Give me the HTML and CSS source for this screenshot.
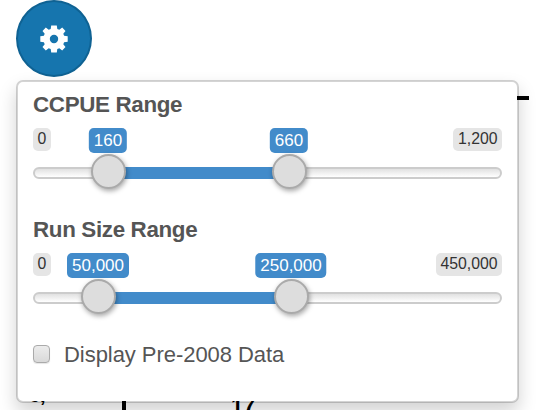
FILE: index.html
```html
<!DOCTYPE html>
<html lang="en">
<head>
<meta charset="utf-8">
<title>Range settings</title>
<link rel="stylesheet" href="styles.css">
</head>
<body>
<div class="plot" aria-hidden="true">
  <span class="axis-line"></span>
  <span class="axis-tick"></span>
  <span class="plot-label label-left">6,</span>
  <span class="plot-label label-mid">17</span>
</div>
<main class="settings">
  <button class="gear-button" aria-label="Settings">
    <svg width="28" height="28" viewBox="0 0 28 28"><path fill="#fff" fill-rule="evenodd" d="M11.2 .4h5.6l.5 3.6 2 .8 2.9-2.2 3.3 3.3-2.2 2.8.8 2 3.6.5v5.6l-3.6.5-.8 2 2.2 2.8-3.3 3.3-2.9-2.2-2 .8-.5 3.6h-5.6l-.5-3.6-2-.8-2.9 2.2-3.3-3.3 2.2-2.8-.8-2-3.6-.5v-5.6l3.6-.5.8-2-2.2-2.8 3.3-3.3 2.9 2.2 2-.8zM14 9.8a4.2 4.2 0 1 0 0 8.4 4.2 4.2 0 0 0 0-8.4z"/></svg>
  </button>
  <section class="panel">
    <div class="field">
      <h2 class="title">CCPUE Range</h2>
      <div class="slider">
        <div class="limits"><span class="limit">0</span><span class="limit">1,200</span></div>
        <div class="track"></div>
        <span class="bar" style="left:75px;width:181px"></span>
        <span class="value" style="left:75px">160</span>
        <span class="value" style="left:256px">660</span>
        <span class="handle" style="left:75px"></span>
        <span class="handle" style="left:256px"></span>
      </div>
    </div>
    <div class="field">
      <h2 class="title">Run Size Range</h2>
      <div class="slider">
        <div class="limits"><span class="limit">0</span><span class="limit">450,000</span></div>
        <div class="track"></div>
        <span class="bar" style="left:65px;width:193px"></span>
        <span class="value" style="left:65px">50,000</span>
        <span class="value" style="left:258px">250,000</span>
        <span class="handle" style="left:65.5px"></span>
        <span class="handle" style="left:258.5px"></span>
      </div>
    </div>
    <label class="check"><input type="checkbox" class="box"><span class="check-text">Display Pre-2008 Data</span></label>
  </section>
</main>
</body>
</html>
```

FILE: styles.css
```css
* { box-sizing: border-box; }
body {
  margin: 0;
  height: 410px;
  overflow: hidden;
  position: relative;
  background: #fff;
  font-family: "Liberation Sans", Arial, sans-serif;
  color: #555;
}
.settings { position: relative; padding-left: 16px; }
.gear-button {
  display: flex;
  align-items: center;
  justify-content: center;
  width: 76px;
  height: 77px;
  padding: 0;
  border: 2px solid #0f6293;
  border-radius: 50%;
  background: #1675ae;
}
.gear-button svg { display: block; }
.panel {
  width: 503px;
  height: 323px;
  margin-top: 3px;
  padding: 8px 15px;
  border: 2px solid rgba(0, 0, 0, .17);
  border-radius: 7px;
  background: #fff;
  background-clip: padding-box;
  box-shadow: 0 9px 18px rgba(0, 0, 0, .175);
}
.field { height: 125px; }
.title {
  margin: 0;
  height: 38px;
  font-size: 22.4px;
  letter-spacing: -.35px;
  line-height: 29px;
  font-weight: bold;
  white-space: nowrap;
}
.slider { position: relative; width: 469px; height: 62px; }
.limits { display: flex; justify-content: space-between; height: 39px; }
.limit {
  height: 23px;
  padding: 0 4.5px;
  border-radius: 5px;
  background: #e5e5e5;
  color: #333;
  font-size: 15.8px;
  line-height: 22px;
}
.track {
  height: 12px;
  border: 2px solid #ccc;
  border-radius: 6px;
  background: linear-gradient(#e1e1e1, #fff);
}
.bar { position: absolute; top: 39px; height: 12px; background: #428bca; }
.value {
  position: absolute;
  top: 0;
  height: 25px;
  padding: 0 5px;
  border-radius: 5px;
  transform: translateX(-50%);
  background: #428bca;
  color: #fff;
  font-size: 17px;
  line-height: 25px;
}
.handle {
  position: absolute;
  top: 26px;
  width: 35px;
  height: 35px;
  margin-left: -17.5px;
  border: 2px solid #aaa;
  border-radius: 50%;
  background: #ddd;
  box-shadow: 1px 2px 5px rgba(0, 0, 0, .35);
}
.check {
  display: flex;
  align-items: center;
  gap: 14px;
  height: 28px;
  font-size: 22px;
  letter-spacing: -.05px;
  white-space: nowrap;
}
.check-text { padding-top: 2px; }
.box {
  appearance: none;
  width: 17px;
  height: 18px;
  margin: 0;
  border: 1.5px solid #aaa;
  border-radius: 4px;
  background: linear-gradient(#ececec, #d9d9d9);
  box-shadow: 0 1px 1px rgba(0, 0, 0, .1);
}
.plot { position: absolute; inset: 0; overflow: hidden; color: #000; }
.axis-line { position: absolute; left: 500px; top: 96px; width: 29px; height: 4px; background: #000; }
.axis-tick { position: absolute; left: 122px; top: 390px; width: 4px; height: 20px; background: #000; }
.plot-label { position: absolute; font-weight: bold; }
.label-left { left: 29px; top: 384px; font-size: 20px; line-height: 23px; }
.label-mid { left: 231px; top: 394px; font-size: 22px; line-height: 24px; }
```
